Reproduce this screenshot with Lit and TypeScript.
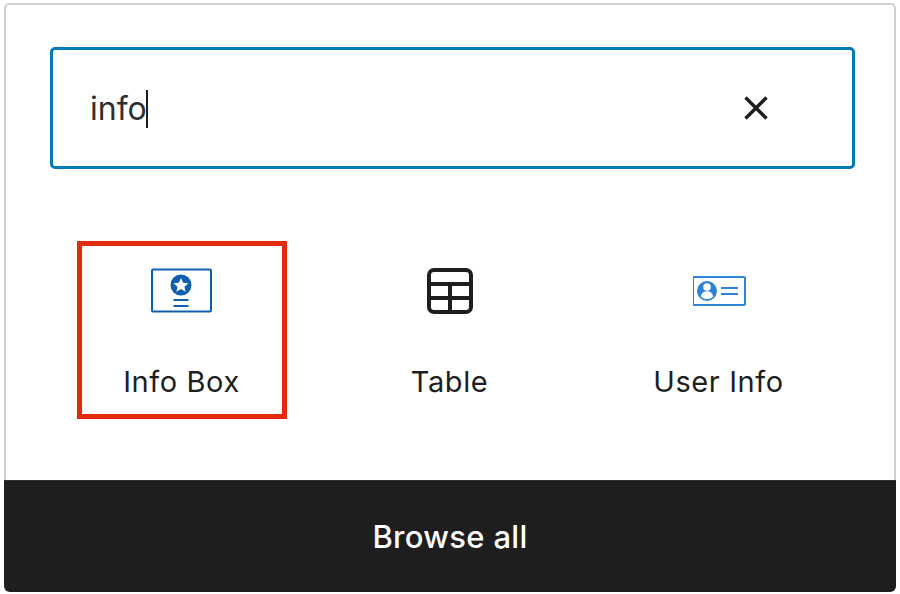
import { LitElement, html, css } from "lit";
import { customElement } from "lit/decorators.js";

@customElement("app-root")
export class AppRoot extends LitElement {
  static styles = css`
    :host { display: block; width: 900px; height: 594px; background: #fff; box-sizing: border-box; padding: 3px 4px 2px 4px; font-family: Inter, "Liberation Sans", sans-serif; color: #1e1e1e; }
    .panel { box-sizing: border-box; height: 100%; border: 2px solid #d0d0d0; border-bottom: none; border-radius: 5px 5px 6px 6px; display: flex; flex-direction: column; background: #fff; }
    .body { flex: 1; display: flex; flex-direction: column; padding: 42px 39px 0 44px; }
    .search { box-sizing: border-box; height: 122px; border: 3px solid #007cba; border-radius: 5px; display: flex; align-items: center; justify-content: space-between; padding: 0 82px 0 37px; }
    .value { display: flex; align-items: center; font-size: 32px; line-height: 40px; color: #2b2f33; padding-top: 2px; }
    .caret { width: 2px; height: 38px; background: #1e1e1e; margin-left: -1px; }
    .close { display: block; width: 28px; height: 28px; }
    .grid { display: grid; grid-template-columns: repeat(3, 269px); margin: 72px 0 0 -3px; }
    .cell { display: flex; justify-content: center; }
    .tile { box-sizing: border-box; width: 210px; height: 178px; border: 5px solid transparent; display: flex; flex-direction: column; align-items: center; padding-top: 20px; }
    .tile.marked { border-color: #e22a0d; }
    .art { height: 50px; display: flex; align-items: center; }
    .label { margin-top: 49px; font-size: 29px; line-height: 34px; letter-spacing: 0.6px; white-space: nowrap; }
    .label.shift { margin-left: -2px; }
    .browse { height: 112px; flex: none; background: #1e1e1e; border-top: 1px solid #333; border-radius: 0 0 6px 6px; box-sizing: border-box; color: #fff; display: flex; align-items: center; justify-content: center; font-size: 31px; letter-spacing: 0.3px; font-weight: 500; margin: 0 -2px; }
  `;

  render() {
    return html`
      <div class="panel">
        <div class="body">
          <div class="search">
            <div class="value"><span>info</span><span class="caret"></span></div>
            <svg class="close" viewBox="0 0 28 28" fill="none" stroke="#1e1e1e" stroke-width="3.4"><path d="M3.5 3.5 24.5 24.5M24.5 3.5 3.5 24.5" /></svg>
          </div>
          <div class="grid">
            <div class="cell">
              <div class="tile marked">
                <div class="art">
                  <svg width="62" height="46" viewBox="0 0 62 46" fill="none">
                    <rect x="1" y="1.5" width="59" height="42" rx="1" stroke="#0f5fae" stroke-width="2" />
                    <circle cx="30" cy="17" r="10.5" fill="#0f5fae" />
                    <path d="M30 10l2.2 4.7 5.2.6-3.9 3.4 1.1 5-4.6-2.6-4.6 2.6 1.1-5-3.9-3.4 5.2-.6z" fill="#fff" />
                    <path d="M22.5 32h15M22.5 38h15" stroke="#0f5fae" stroke-width="2" />
                  </svg>
                </div>
                <div class="label">Info Box</div>
              </div>
            </div>
            <div class="cell">
              <div class="tile">
                <div class="art">
                  <svg width="48" height="48" viewBox="0 0 48 48" fill="none" stroke="#1e1e1e" stroke-width="4">
                    <rect x="2" y="3" width="42" height="42" rx="5" />
                    <path d="M2 17h42M2 31h42M23 17v28" />
                  </svg>
                </div>
                <div class="label shift">Table</div>
              </div>
            </div>
            <div class="cell">
              <div class="tile">
                <div class="art">
                  <svg width="54" height="30" viewBox="0 0 54 30" fill="none">
                    <rect x="0" y="1" width="52" height="28" rx="1" stroke="#2f83d8" stroke-width="2" />
                    <circle cx="14" cy="15" r="10" fill="#2f83d8" />
                    <circle cx="14" cy="11" r="3.8" fill="#fff" />
                    <path d="M7.8 20.5c.6-3.6 3-5.3 6.2-5.3s5.6 1.7 6.2 5.3c-1.6 1.7-3.8 2.6-6.2 2.6s-4.6-.9-6.2-2.6z" fill="#fff" />
                    <path d="M28 12h17M28 18h17" stroke="#2f83d8" stroke-width="2" />
                  </svg>
                </div>
                <div class="label shift">User Info</div>
              </div>
            </div>
          </div>
        </div>
        <div class="browse">Browse all</div>
      </div>
    `;
  }
}
